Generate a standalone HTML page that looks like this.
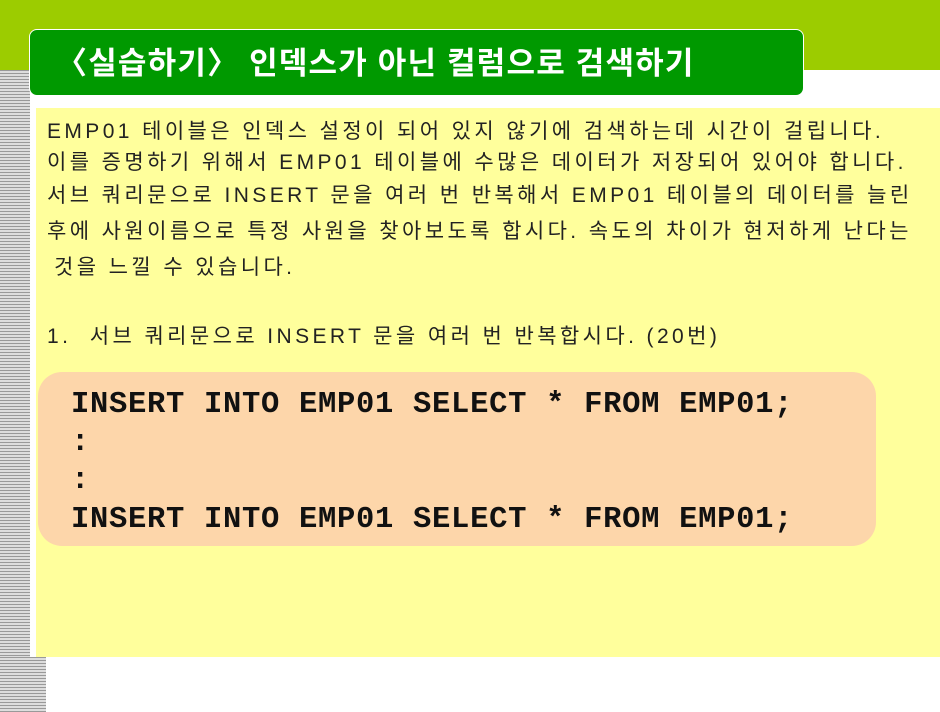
<!DOCTYPE html>
<html><head><meta charset="utf-8"><style>
body{margin:0;width:940px;height:712px;position:relative;overflow:hidden;background:#fff;font-family:"Liberation Sans","Noto Sans CJK KR",sans-serif}
.band{position:absolute;left:0;top:0;width:940px;height:70px;background:#9ccc00}
.stripes{position:absolute;left:0;top:70px;width:30px;height:642px;background:repeating-linear-gradient(to bottom,#999 0 1px,#ddd 1px 3px)}
.stripes2{position:absolute;left:0;top:657px;width:46px;height:55px;background:repeating-linear-gradient(to bottom,#999 0 1px,#ddd 1px 3px)}
.yellow{position:absolute;left:36px;top:108px;width:904px;height:549px;background:#ffff9c}
.title{position:absolute;left:29px;top:29px;width:775px;height:67px;background:#009900;border:1.5px solid #fff;border-radius:8px;color:#fff;font-weight:bold;font-size:31px;line-height:67px;padding-left:26px;box-sizing:border-box;letter-spacing:1.2px;white-space:nowrap}
.t{position:absolute;left:47px;font-size:21px;letter-spacing:3.4px;color:#222;white-space:nowrap;line-height:24px}
.code{position:absolute;left:38px;top:372px;width:838px;height:174px;background:#fdd6aa;border-radius:24px}
.c{position:absolute;left:71px;font-family:"Liberation Mono",monospace;font-size:30.5px;font-weight:bold;color:#111;white-space:nowrap;line-height:34px;letter-spacing:0.7px}
</style></head><body>
<div class="band"></div>
<div class="stripes"></div>
<div class="stripes2"></div>
<div class="yellow"></div>
<div class="title">〈실습하기〉 인덱스가 아닌 컬럼으로 검색하기</div>
<div class="t" style="top:120px">EMP01 테이블은 인덱스 설정이 되어 있지 않기에 검색하는데 시간이 걸립니다.</div>
<div class="t" style="top:151px">이를 증명하기 위해서 EMP01 테이블에 수많은 데이터가 저장되어 있어야 합니다.</div>
<div class="t" style="top:184px">서브 쿼리문으로 INSERT 문을 여러 번 반복해서 EMP01 테이블의 데이터를 늘린</div>
<div class="t" style="top:220px">후에 사원이름으로 특정 사원을 찾아보도록 합시다. 속도의 차이가 현저하게 난다는</div>
<div class="t" style="top:256px;left:54px">것을 느낄 수 있습니다.</div>
<div class="t" style="top:325px">1.&nbsp; 서브 쿼리문으로 INSERT 문을 여러 번 반복합시다. (20번)</div>
<div class="code"></div>
<div class="c" style="top:388px">INSERT INTO EMP01 SELECT * FROM EMP01;</div>
<div class="c" style="top:426px">:</div>
<div class="c" style="top:464px">:</div>
<div class="c" style="top:503px">INSERT INTO EMP01 SELECT * FROM EMP01;</div>
</body></html>
